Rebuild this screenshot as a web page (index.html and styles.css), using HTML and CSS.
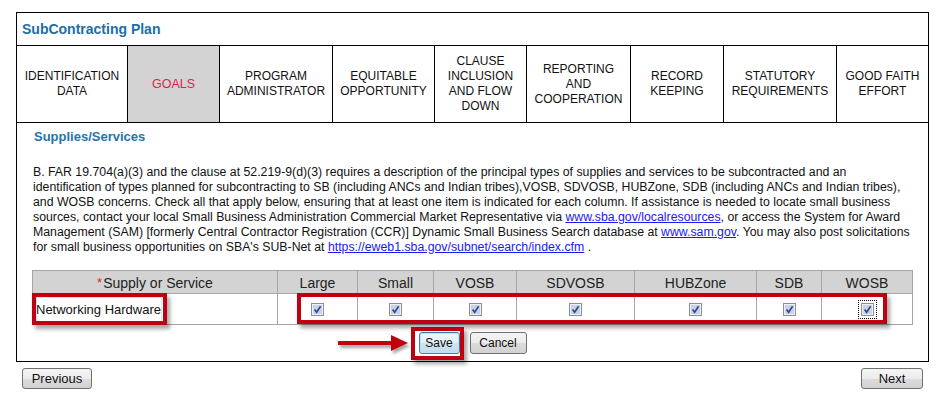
FILE: index.html
```html
<!DOCTYPE html>
<html>
<head>
<meta charset="utf-8">
<link rel="stylesheet" href="styles.css">
</head>
<body>
<div class="page">
  <div class="panel">
    <div class="title">SubContracting Plan</div>
    <div class="tabs">
      <div class="tab">IDENTIFICATION<br>DATA</div>
      <div class="tab active">GOALS</div>
      <div class="tab">PROGRAM<br>ADMINISTRATOR</div>
      <div class="tab">EQUITABLE<br>OPPORTUNITY</div>
      <div class="tab">CLAUSE<br>INCLUSION<br>AND FLOW<br>DOWN</div>
      <div class="tab">REPORTING<br>AND<br>COOPERATION</div>
      <div class="tab">RECORD<br>KEEPING</div>
      <div class="tab">STATUTORY<br>REQUIREMENTS</div>
      <div class="tab">GOOD FAITH<br>EFFORT</div>
    </div>
    <div class="content">
      <h2 class="section">Supplies/Services</h2>
      <p class="desc">B. FAR 19.704(a)(3) and the clause at 52.219-9(d)(3) requires a description of the principal types of supplies and services to be subcontracted and an<br>identification of types planned for subcontracting to SB (including ANCs and Indian tribes),VOSB, SDVOSB, HUBZone, SDB (including ANCs and Indian tribes),<br>and WOSB concerns. Check all that apply below, ensuring that at least one item is indicated for each column. If assistance is needed to locate small business<br>sources, contact your local Small Business Administration Commercial Market Representative via <a href="#">www.sba.gov/localresources</a>, or access the System for Award<br>Management (SAM) [formerly Central Contractor Registration (CCR)] Dynamic Small Business Search database at <a href="#">www.sam.gov</a>. You may also post solicitations<br>for small business opportunities on SBA's SUB-Net at <a href="#">https://eweb1.sba.gov/subnet/search/index.cfm</a> .</p>
      <div class="grid">
        <div class="th"><span class="req">*</span>Supply or Service</div>
        <div class="th">Large</div>
        <div class="th">Small</div>
        <div class="th">VOSB</div>
        <div class="th">SDVOSB</div>
        <div class="th">HUBZone</div>
        <div class="th">SDB</div>
        <div class="th">WOSB</div>
        <div class="td first"><div class="input"><span class="val">Networking Hardware</span></div></div>
        <div class="td"><span class="cb"><svg width="13" height="13" viewBox="0 0 13 13"><rect x="0.5" y="0.5" width="12" height="12" fill="#eef0f4" stroke="#8c8f94"/><rect x="2" y="2" width="9" height="9" fill="#c9d2e2"/><path d="M3.6 6.6 L5.6 9.2 L9.6 3.2" stroke="#2a4b9b" stroke-width="1.7" fill="none"/></svg></span></div>
        <div class="td"><span class="cb"><svg width="13" height="13" viewBox="0 0 13 13"><rect x="0.5" y="0.5" width="12" height="12" fill="#eef0f4" stroke="#8c8f94"/><rect x="2" y="2" width="9" height="9" fill="#c9d2e2"/><path d="M3.6 6.6 L5.6 9.2 L9.6 3.2" stroke="#2a4b9b" stroke-width="1.7" fill="none"/></svg></span></div>
        <div class="td"><span class="cb"><svg width="13" height="13" viewBox="0 0 13 13"><rect x="0.5" y="0.5" width="12" height="12" fill="#eef0f4" stroke="#8c8f94"/><rect x="2" y="2" width="9" height="9" fill="#c9d2e2"/><path d="M3.6 6.6 L5.6 9.2 L9.6 3.2" stroke="#2a4b9b" stroke-width="1.7" fill="none"/></svg></span></div>
        <div class="td"><span class="cb"><svg width="13" height="13" viewBox="0 0 13 13"><rect x="0.5" y="0.5" width="12" height="12" fill="#eef0f4" stroke="#8c8f94"/><rect x="2" y="2" width="9" height="9" fill="#c9d2e2"/><path d="M3.6 6.6 L5.6 9.2 L9.6 3.2" stroke="#2a4b9b" stroke-width="1.7" fill="none"/></svg></span></div>
        <div class="td"><span class="cb"><svg width="13" height="13" viewBox="0 0 13 13"><rect x="0.5" y="0.5" width="12" height="12" fill="#eef0f4" stroke="#8c8f94"/><rect x="2" y="2" width="9" height="9" fill="#c9d2e2"/><path d="M3.6 6.6 L5.6 9.2 L9.6 3.2" stroke="#2a4b9b" stroke-width="1.7" fill="none"/></svg></span></div>
        <div class="td"><span class="cb"><svg width="13" height="13" viewBox="0 0 13 13"><rect x="0.5" y="0.5" width="12" height="12" fill="#eef0f4" stroke="#8c8f94"/><rect x="2" y="2" width="9" height="9" fill="#c9d2e2"/><path d="M3.6 6.6 L5.6 9.2 L9.6 3.2" stroke="#2a4b9b" stroke-width="1.7" fill="none"/></svg></span></div>
        <div class="td"><span class="cb focus"><svg width="13" height="13" viewBox="0 0 13 13"><rect x="0.5" y="0.5" width="12" height="12" fill="#eef0f4" stroke="#8c8f94"/><rect x="2" y="2" width="9" height="9" fill="#c9d2e2"/><path d="M3.6 6.6 L5.6 9.2 L9.6 3.2" stroke="#2a4b9b" stroke-width="1.7" fill="none"/></svg></span></div>
      </div>
      <div class="actions">
        <button class="btn save">Save</button>
        <button class="btn cancel">Cancel</button>
      </div>
    </div>
  </div>
  <div class="nav">
    <button class="btn navbtn prev">Previous</button>
    <button class="btn navbtn next">Next</button>
  </div>

  <div class="hl hl-input"></div>
  <div class="hl hl-checks"></div>
  <div class="hl hl-save"></div>
  <svg class="arrow" width="80" height="24" viewBox="0 0 80 24">
    <defs>
      <filter id="sh" x="-20%" y="-50%" width="150%" height="220%">
        <feDropShadow dx="2" dy="3" stdDeviation="1.6" flood-color="#000" flood-opacity="0.35"/>
      </filter>
    </defs>
    <g filter="url(#sh)">
      <rect x="2" y="7" width="56" height="4" fill="#c00010"/>
      <polygon points="55,1 72,9 55,17" fill="#c00010"/>
    </g>
  </svg>
</div>
</body>
</html>
```

FILE: styles.css
```css
* { box-sizing: border-box; }
html, body { margin: 0; padding: 0; background: #fff; }
body {
  font-family: "Liberation Sans", Arial, sans-serif;
  color: #111;
  width: 944px;
  height: 408px;
  overflow: hidden;
}
.page {
  position: relative;
  width: 944px;
  height: 408px;
  padding-top: 12px;
}
.panel {
  margin-left: 16px;
  width: 913px;
  height: 350px;
  border: 1px solid #000;
  display: flex;
  flex-direction: column;
}
.title {
  height: 33px;
  border-bottom: 1px solid #000;
  padding-left: 5px;
  display: flex;
  align-items: center;
  font-size: 14px;
  font-weight: bold;
  color: #1d6ea6;
}
.tabs {
  display: grid;
  grid-template-columns: 110px 92px 113px 102px 92px 104px 93px 113px 92px;
  height: 77px;
  border-bottom: 1px solid #000;
}
.tab {
  display: flex;
  align-items: center;
  justify-content: center;
  text-align: center;
  font-size: 12px;
  line-height: 15px;
  color: #111;
  border-left: 1px solid #000;
}
.tab:first-child { border-left: none; }
.tab.active {
  background: #d3d3d3;
  color: #dd1f4c;
  font-size: 12.5px;
}
.content {
  flex: 1;
  padding-left: 15px;
}
.section {
  margin: 6px 0 0 2px;
  font-size: 13px;
  line-height: 16px;
  font-weight: bold;
  color: #2474ab;
}
.desc {
  margin: 20px 0 0 1px;
  width: 900px;
  font-size: 12.3px;
  line-height: 15px;
  color: #111;
  white-space: nowrap;
}
.desc a { color: #1a1aee; text-decoration: underline; }
.grid {
  margin-top: 15px;
  display: grid;
  grid-template-columns: 245px 80px 76px 83px 118px 122px 65px 91px;
  grid-template-rows: 23px 31px;
  width: 881px;
  border-right: 1px solid #a6a6a6;
  border-bottom: 1px solid #a6a6a6;
}
.th {
  background: #d3d3d3;
  border-left: 1px solid #a6a6a6;
  border-top: 1px solid #a6a6a6;
  font-size: 14px;
  color: #222;
  display: flex;
  align-items: center;
  justify-content: center;
  padding-top: 1px;
}
.req { color: #e02020; font-size: 13px; margin-right: 1px; }
.td {
  background: #fff;
  border-left: 1px solid #a6a6a6;
  border-top: 1px solid #a6a6a6;
  display: flex;
  align-items: center;
  justify-content: center;
}
.td.first {
  justify-content: flex-start;
  padding-left: 3px;
}
.input {
  width: 126px;
  height: 25px;
  border: 1px solid #e2e2e2;
  overflow: hidden;
  white-space: nowrap;
  font-size: 13px;
  line-height: 23px;
  color: #111;
}
.val { display: inline-block; margin-left: -1px; }
.cb {
  display: inline-flex;
  width: 13px;
  height: 13px;
}
.cb.focus {
  outline: 1px dotted #000;
  outline-offset: 2px;
}
.actions {
  margin-top: 7px;
  display: flex;
  justify-content: center;
  gap: 10px;
  padding-right: 15px;
}
.btn {
  font-family: "Liberation Sans", Arial, sans-serif;
  font-size: 12px;
  color: #111;
  height: 22px;
  padding: 0;
  border: 1px solid #707070;
  border-radius: 3px;
  background: linear-gradient(#f4f4f4 0%, #ececec 50%, #dcdcdc 51%, #d2d2d2 100%);
}
.save {
  width: 41px;
  border-color: #3c7fb1;
  background: linear-gradient(#eef6fb 0%, #e2eef6 50%, #cfe2ef 51%, #c4dcec 100%);
  box-shadow: inset 0 0 0 1px #bfe3f7;
}
.cancel { width: 57px; }
.nav {
  margin-top: 6px;
  padding-left: 22px;
  width: 923px;
  display: flex;
  justify-content: space-between;
}
.navbtn { height: 21px; font-size: 13px; }
.prev { width: 70px; }
.next { width: 62px; }
.hl {
  position: absolute;
  border: 4px solid #c00010;
  box-shadow: 3px 4px 4px rgba(0,0,0,0.35);
}
.hl-input { left: 32px; top: 293px; width: 135px; height: 32px; }
.hl-checks { left: 297px; top: 293px; width: 590px; height: 31px; }
.hl-save { left: 411px; top: 327px; width: 53px; height: 33px; }
.arrow { position: absolute; left: 336px; top: 334px; }
```
